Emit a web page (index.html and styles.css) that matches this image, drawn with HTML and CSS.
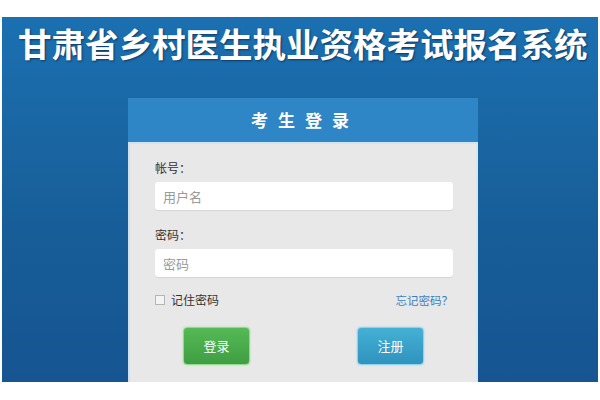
FILE: index.html
```html
<!DOCTYPE html>
<html lang="zh-CN">
<head>
<meta charset="utf-8">
<title>甘肃省乡村医生执业资格考试报名系统</title>
<link rel="stylesheet" href="styles.css">
</head>
<body>
<div class="banner">
  <h1 class="site-title">甘肃省乡村医生执业资格考试报名系统</h1>
  <div class="card">
    <div class="card-head">考生登录</div>
    <div class="card-body">
      <div class="label">帐号：</div>
      <div class="input"><span class="ph">用户名</span></div>
      <div class="label label-2">密码：</div>
      <div class="input"><span class="ph">密码</span></div>
      <div class="opts">
        <label class="remember"><span class="box"></span>记住密码</label>
        <a class="forgot">忘记密码？</a>
      </div>
      <div class="actions">
        <div class="btn btn-green">登录</div>
        <div class="btn btn-blue">注册</div>
      </div>
    </div>
  </div>
</div>
</body>
</html>
```
FILE: styles.css
```css
html, body {
  margin: 0;
  padding: 0;
  background: #ffffff;
  font-family: "Noto Sans CJK SC", "Noto Sans", sans-serif;
}
.banner {
  margin: 17px 2px 0;
  height: 365px;
  background: linear-gradient(180deg, #1b70b1 0%, #1a68a6 25%, #175d98 60%, #165591 100%);
  overflow: hidden;
}
.site-title {
  margin: 0;
  padding: 3px 0 0 16px;
  height: 46px;
  line-height: 46px;
  font-size: 33.5px;
  font-weight: 700;
  color: #ffffff;
  white-space: nowrap;
  text-shadow: 1px 1px 2px rgba(0, 20, 50, 0.6);
}
.card {
  margin: 32px 0 0 126px;
  width: 350px;
}
.card-head {
  height: 44px;
  line-height: 44px;
  background: #2e86c7;
  color: #ffffff;
  font-size: 17px;
  font-weight: 700;
  text-align: center;
  letter-spacing: 10px;
  padding-left: 4px;
}
.card-body {
  height: 240px;
  box-sizing: border-box;
  background: #e9e8e8;
  border-left: 2px solid #cfe2f2;
  border-right: 2px solid #d6e6f3;
  border-top: 2px solid #cfe4f5;
  padding: 16px 23px 0 25px;
  display: flex;
  flex-direction: column;
}
.label {
  font-size: 12px;
  line-height: 16px;
  color: #333333;
}
.label-2 {
  margin-top: 17px;
}
.input {
  margin-top: 6px;
  height: 28px;
  background: #ffffff;
  border-radius: 3px;
  box-shadow: 0 1px 1px rgba(0, 0, 0, 0.08);
  display: flex;
  align-items: center;
  padding-left: 8px;
}
.ph {
  font-size: 13px;
  color: #9a9a9a;
}
.opts {
  margin-top: 15px;
  display: flex;
  justify-content: space-between;
  align-items: center;
  font-size: 12px;
  line-height: 16px;
}
.remember {
  display: flex;
  align-items: center;
  color: #333333;
}
.box {
  width: 8px;
  height: 8px;
  border: 1px solid #b5b5b5;
  background: #f4f4f4;
  margin-right: 6px;
}
.forgot {
  color: #3b7fc2;
  font-size: 11.5px;
}
.actions {
  margin-top: 19px;
  padding-left: 28px;
  display: flex;
  gap: 107px;
}
.btn {
  width: 67px;
  height: 38px;
  box-sizing: border-box;
  border-radius: 4px;
  color: #ffffff;
  font-size: 13px;
  line-height: 36px;
  text-align: center;
}
.btn-green {
  background: linear-gradient(180deg, #55b955, #3f9e43);
  border: 1px solid #8fdc8f;
  box-shadow: 0 0 2px rgba(120, 220, 120, 0.7);
}
.btn-blue {
  background: linear-gradient(180deg, #45b0d6, #2f93bd);
  border: 1px solid #8ed3ec;
  box-shadow: 0 0 2px rgba(120, 200, 230, 0.7);
}
```
